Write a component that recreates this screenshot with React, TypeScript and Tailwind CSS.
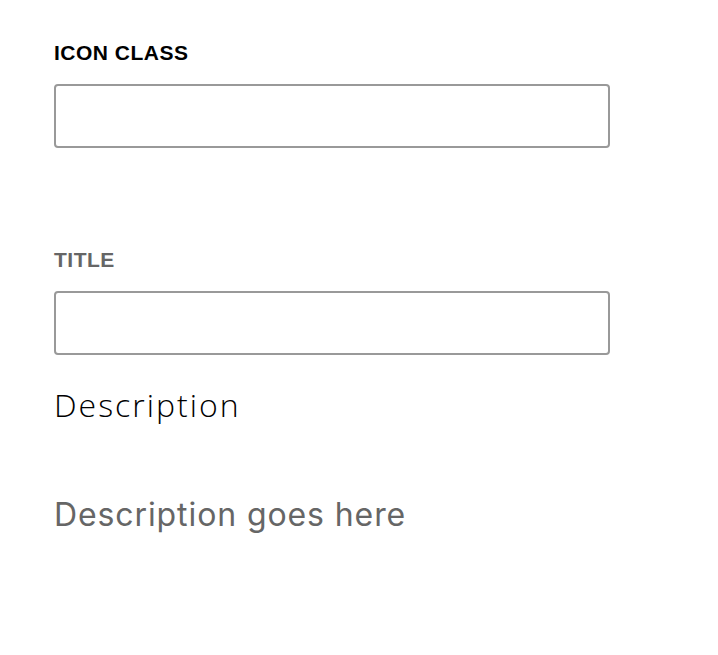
import React from "react";

const Label: React.FC<{ text: string; muted?: boolean }> = ({ text, muted }) => (
  <label
    className={`block h-6 text-[21px] leading-6 font-bold tracking-[0.5px] font-['Liberation_Sans',Arial,sans-serif] ${
      muted ? "text-[#666]" : "text-black"
    }`}
  >
    {text}
  </label>
);

const Field: React.FC = () => (
  <input
    type="text"
    className="block w-[556px] h-16 border-2 border-[#999] rounded-[4px] bg-white outline-none"
  />
);

export default function App() {
  return (
    <div className="min-h-[655px] bg-white pl-[54px] pt-[41px]">
      <Label text="ICON CLASS" />
      <div className="mt-[19px]">
        <Field />
      </div>

      <div className="mt-[100px]">
        <Label text="TITLE" muted />
      </div>
      <div className="mt-[19px]">
        <Field />
      </div>

      <h2 className="mt-[30px] h-10 text-[32px] leading-10 font-light tracking-[2px] text-black font-['Open_Sans',sans-serif]">
        Description
      </h2>
      <p className="mt-[70px] h-10 text-[32px] leading-10 tracking-[0.9px] text-[#666] font-['Inter',sans-serif]">
        Description goes here
      </p>
    </div>
  );
}
